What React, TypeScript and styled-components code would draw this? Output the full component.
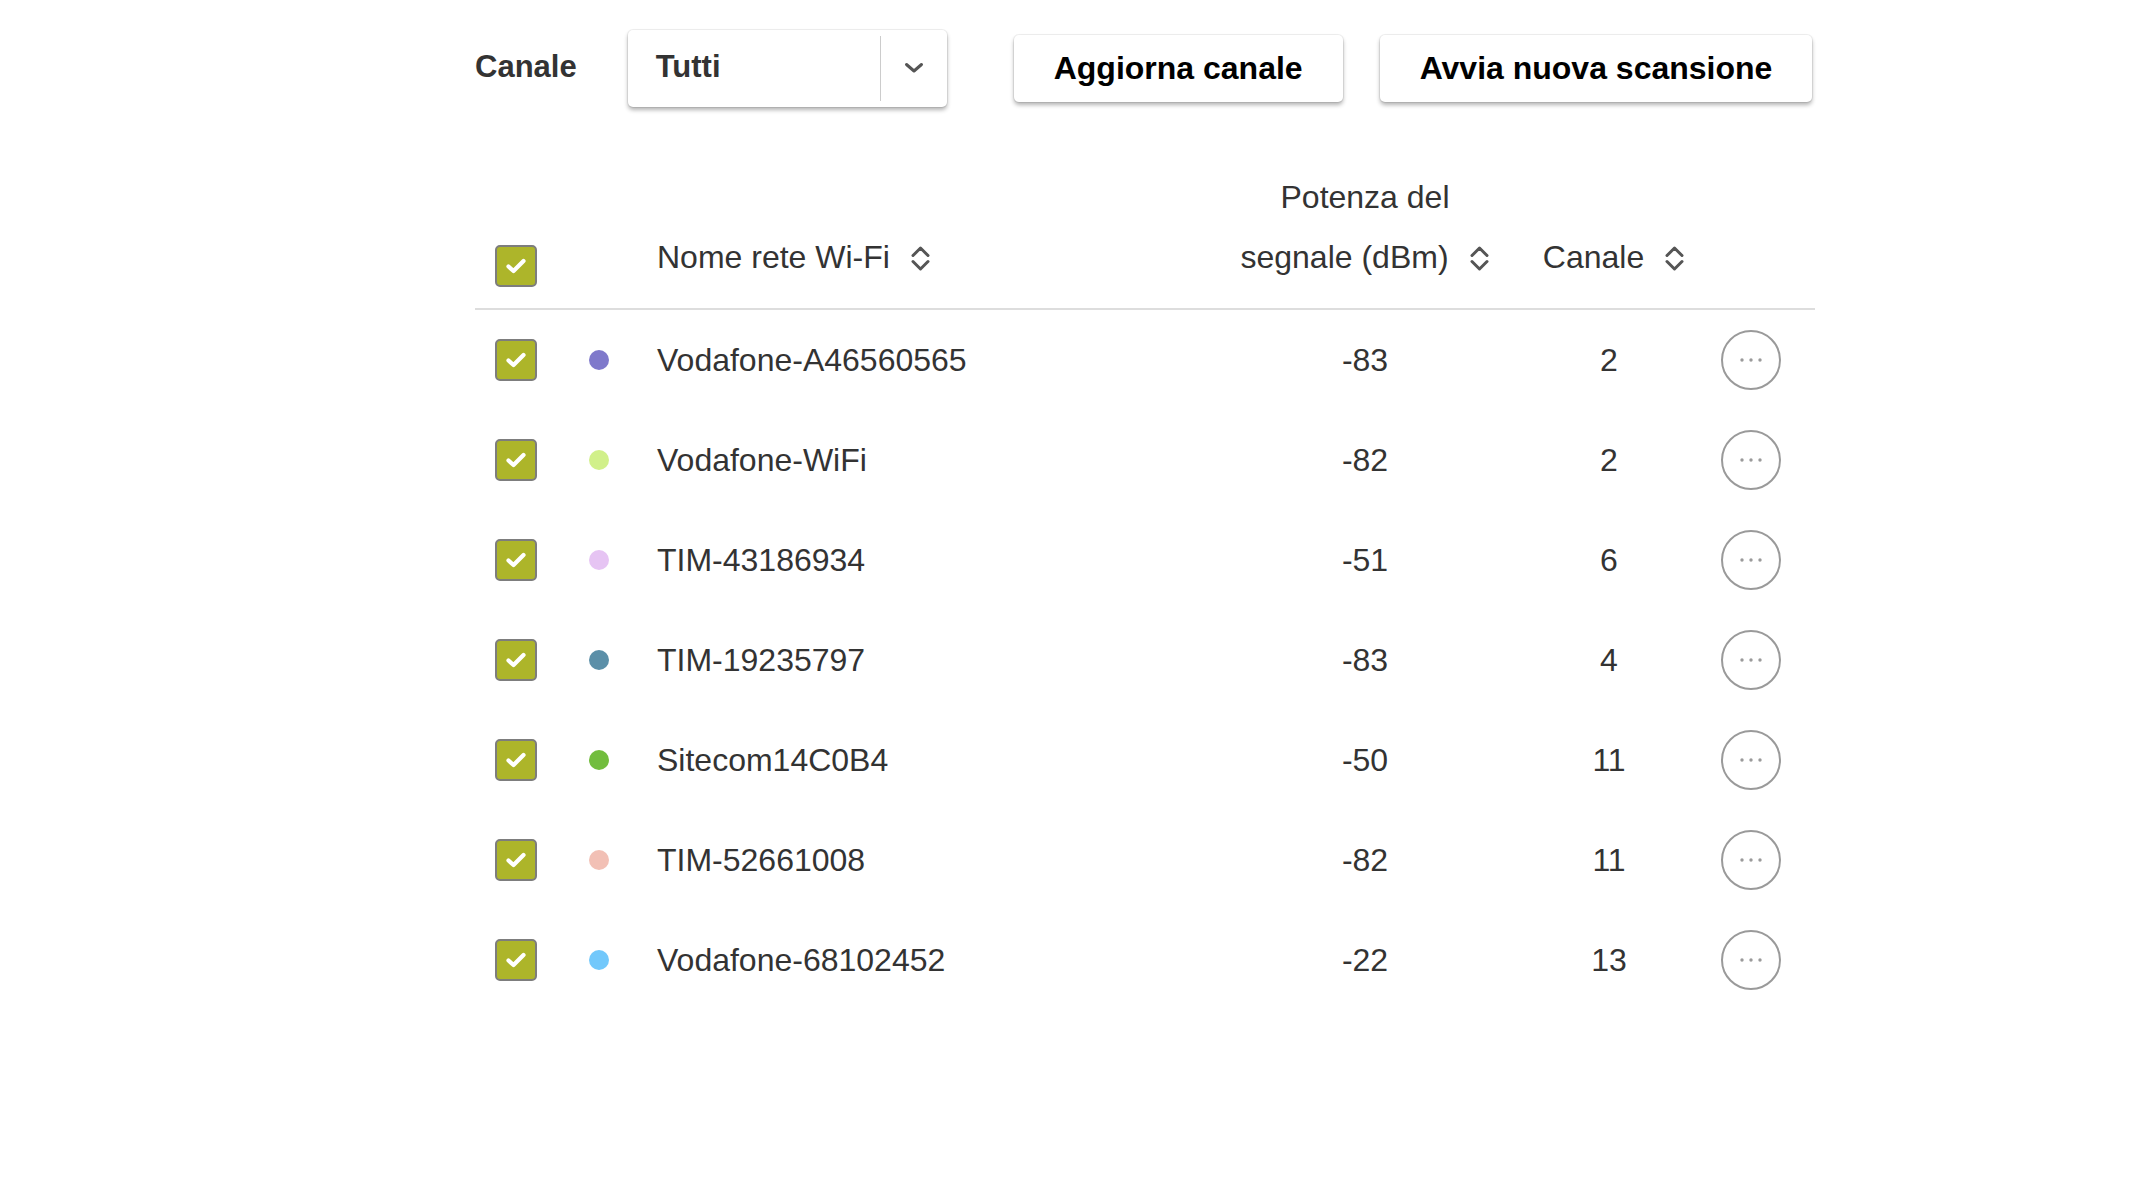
import React from "react";
import styled, { createGlobalStyle } from "styled-components";

const GlobalStyle = createGlobalStyle`
  html, body {
    margin: 0;
    padding: 0;
    background: #ffffff;
  }

  body {
    font-family: "Liberation Sans", Arial, Helvetica, sans-serif;
    color: #333333;
  }
`;

const COLUMNS = "104px 78px 568px 280px 208px 102px";

interface Network {
  name: string;
  colour: string;
  signal: number;
  channel: number;
}

const networks: Network[] = [
  { name: "Vodafone-A46560565", colour: "#7f79cb", signal: -83, channel: 2 },
  { name: "Vodafone-WiFi", colour: "#d1f08a", signal: -82, channel: 2 },
  { name: "TIM-43186934", colour: "#e6c4f3", signal: -51, channel: 6 },
  { name: "TIM-19235797", colour: "#5b8fa8", signal: -83, channel: 4 },
  { name: "Sitecom14C0B4", colour: "#72bd3e", signal: -50, channel: 11 },
  { name: "TIM-52661008", colour: "#f2c0b5", signal: -82, channel: 11 },
  { name: "Vodafone-68102452", colour: "#72c8fb", signal: -22, channel: 13 }
];

const Page = styled.div`
  width: 1340px;
  padding: 30px 0 0 475px;
`;

const Toolbar = styled.div`
  display: flex;
  align-items: center;
  height: 77px;
`;

const ToolbarLabel = styled.span`
  font-size: 31px;
  font-weight: 700;
  color: #333333;
  margin: 0 51px 3px 0;
`;

const Select = styled.div`
  display: flex;
  align-items: stretch;
  width: 319px;
  height: 77px;
  box-sizing: border-box;
  border-radius: 5px;
  background: #ffffff;
  box-shadow: 0 0 0 1px rgba(0, 0, 0, 0.06), 0 3px 4px rgba(0, 0, 0, 0.3);
  margin-right: 67px;
`;

const SelectValue = styled.div`
  flex: 1;
  display: flex;
  align-items: center;
  padding: 0 0 4px 28px;
  font-size: 31px;
  font-weight: 700;
  color: #333333;
`;

const SelectDivider = styled.div`
  width: 1px;
  margin: 6px 0;
  background: #cccccc;
`;

const SelectArrow = styled.div`
  width: 66px;
  display: flex;
  align-items: center;
  justify-content: center;
  padding-bottom: 2px;
  box-sizing: border-box;
`;

const ActionButton = styled.button<{ $gap?: number }>`
  height: 67px;
  padding: 0 40px;
  margin-right: ${(p) => p.$gap ?? 0}px;
  border: none;
  border-radius: 5px;
  background: #ffffff;
  box-shadow: 0 0 0 1px rgba(0, 0, 0, 0.06), 0 3px 4px rgba(0, 0, 0, 0.3);
  font-family: "Liberation Sans", Arial, Helvetica, sans-serif;
  font-size: 32px;
  font-weight: 700;
  color: #000000;
  cursor: pointer;
`;

const Table = styled.div`
  margin-top: 60px;
`;

const HeaderRow = styled.div`
  display: grid;
  grid-template-columns: ${COLUMNS};
  align-items: end;
  padding-bottom: 21px;
  border-bottom: 2px solid #dddddd;
`;

const HeaderCell = styled.div<{ $align?: "left" | "center"; $shift?: number }>`
  font-size: 32px;
  line-height: 60px;
  color: #333333;
  text-align: ${(p) => p.$align ?? "left"};
  padding-left: ${(p) => p.$shift ?? 0}px;
`;

const BoxCell = styled.div`
  display: flex;
  align-items: center;
  padding-left: 20px;
`;

const Row = styled.div`
  display: grid;
  grid-template-columns: ${COLUMNS};
  align-items: center;
  height: 100px;
`;

const DotCell = styled.div`
  padding-left: 10px;
  display: flex;
  align-items: center;
`;

const Dot = styled.span<{ $colour: string }>`
  width: 20px;
  height: 20px;
  border-radius: 50%;
  background: ${(p) => p.$colour};
`;

const TextCell = styled.div<{ $align?: "left" | "center" }>`
  font-size: 32px;
  color: #333333;
  text-align: ${(p) => p.$align ?? "left"};
`;

const MoreCell = styled.div`
  padding-left: 8px;
  display: flex;
  align-items: center;
`;

const MoreButton = styled.button`
  width: 60px;
  height: 60px;
  box-sizing: border-box;
  border-radius: 50%;
  border: 2px solid #9a9a9a;
  background: #ffffff;
  padding: 0;
  display: flex;
  align-items: center;
  justify-content: center;
  cursor: pointer;
`;

const CheckBox = styled.span`
  width: 42px;
  height: 42px;
  box-sizing: border-box;
  border: 2px solid #7d7d7d;
  border-radius: 5px;
  background: #adb52a;
  display: flex;
  align-items: center;
  justify-content: center;
`;

const SortGlyph = styled.svg`
  margin-left: 20px;
  vertical-align: -5px;
`;

const Check = () => (
  <CheckBox>
    <svg width="22" height="18" viewBox="0 0 22 18">
      <path
        d="M3.5 9.5 L8.5 14 L18.5 4"
        fill="none"
        stroke="#ffffff"
        strokeWidth="4.2"
        strokeLinecap="round"
        strokeLinejoin="round"
      />
    </svg>
  </CheckBox>
);

const SortIcon = () => (
  <SortGlyph width="21" height="29" viewBox="0 0 21 29">
    <path
      d="M3 11.5 L10.5 4 L18 11.5 M3 17.5 L10.5 25 L18 17.5"
      fill="none"
      stroke="#555555"
      strokeWidth="3"
      strokeLinecap="round"
      strokeLinejoin="round"
    />
  </SortGlyph>
);

const App: React.FC = () => {
  return (
    <>
      <GlobalStyle />
      <Page>
        <Toolbar>
          <ToolbarLabel>Canale</ToolbarLabel>
          <Select>
            <SelectValue>Tutti</SelectValue>
            <SelectDivider />
            <SelectArrow>
              <svg width="20" height="12" viewBox="0 0 20 12">
                <path
                  d="M2.5 2.5 L10 9 L17.5 2.5"
                  fill="none"
                  stroke="#555555"
                  strokeWidth="3"
                  strokeLinecap="round"
                  strokeLinejoin="round"
                />
              </svg>
            </SelectArrow>
          </Select>
          <ActionButton $gap={37}>Aggiorna canale</ActionButton>
          <ActionButton>Avvia nuova scansione</ActionButton>
        </Toolbar>

        <Table>
          <HeaderRow>
            <BoxCell>
              <Check />
            </BoxCell>
            <div />
            <HeaderCell>
              Nome rete Wi-Fi
              <SortIcon />
            </HeaderCell>
            <HeaderCell $align="center">
              Potenza del
              <br />
              segnale (dBm)
              <SortIcon />
            </HeaderCell>
            <HeaderCell $align="center" $shift={10}>
              Canale
              <SortIcon />
            </HeaderCell>
            <div />
          </HeaderRow>

          {networks.map((net) => (
            <Row key={net.name}>
              <BoxCell>
                <Check />
              </BoxCell>
              <DotCell>
                <Dot $colour={net.colour} />
              </DotCell>
              <TextCell>{net.name}</TextCell>
              <TextCell $align="center">{net.signal}</TextCell>
              <TextCell $align="center">{net.channel}</TextCell>
              <MoreCell>
                <MoreButton aria-label="Altro">
                  <svg width="24" height="4" viewBox="0 0 24 4">
                    <circle cx="3" cy="2" r="1.7" fill="#9a9a9a" />
                    <circle cx="12" cy="2" r="1.7" fill="#9a9a9a" />
                    <circle cx="21" cy="2" r="1.7" fill="#9a9a9a" />
                  </svg>
                </MoreButton>
              </MoreCell>
            </Row>
          ))}
        </Table>
      </Page>
    </>
  );
};

export default App;
